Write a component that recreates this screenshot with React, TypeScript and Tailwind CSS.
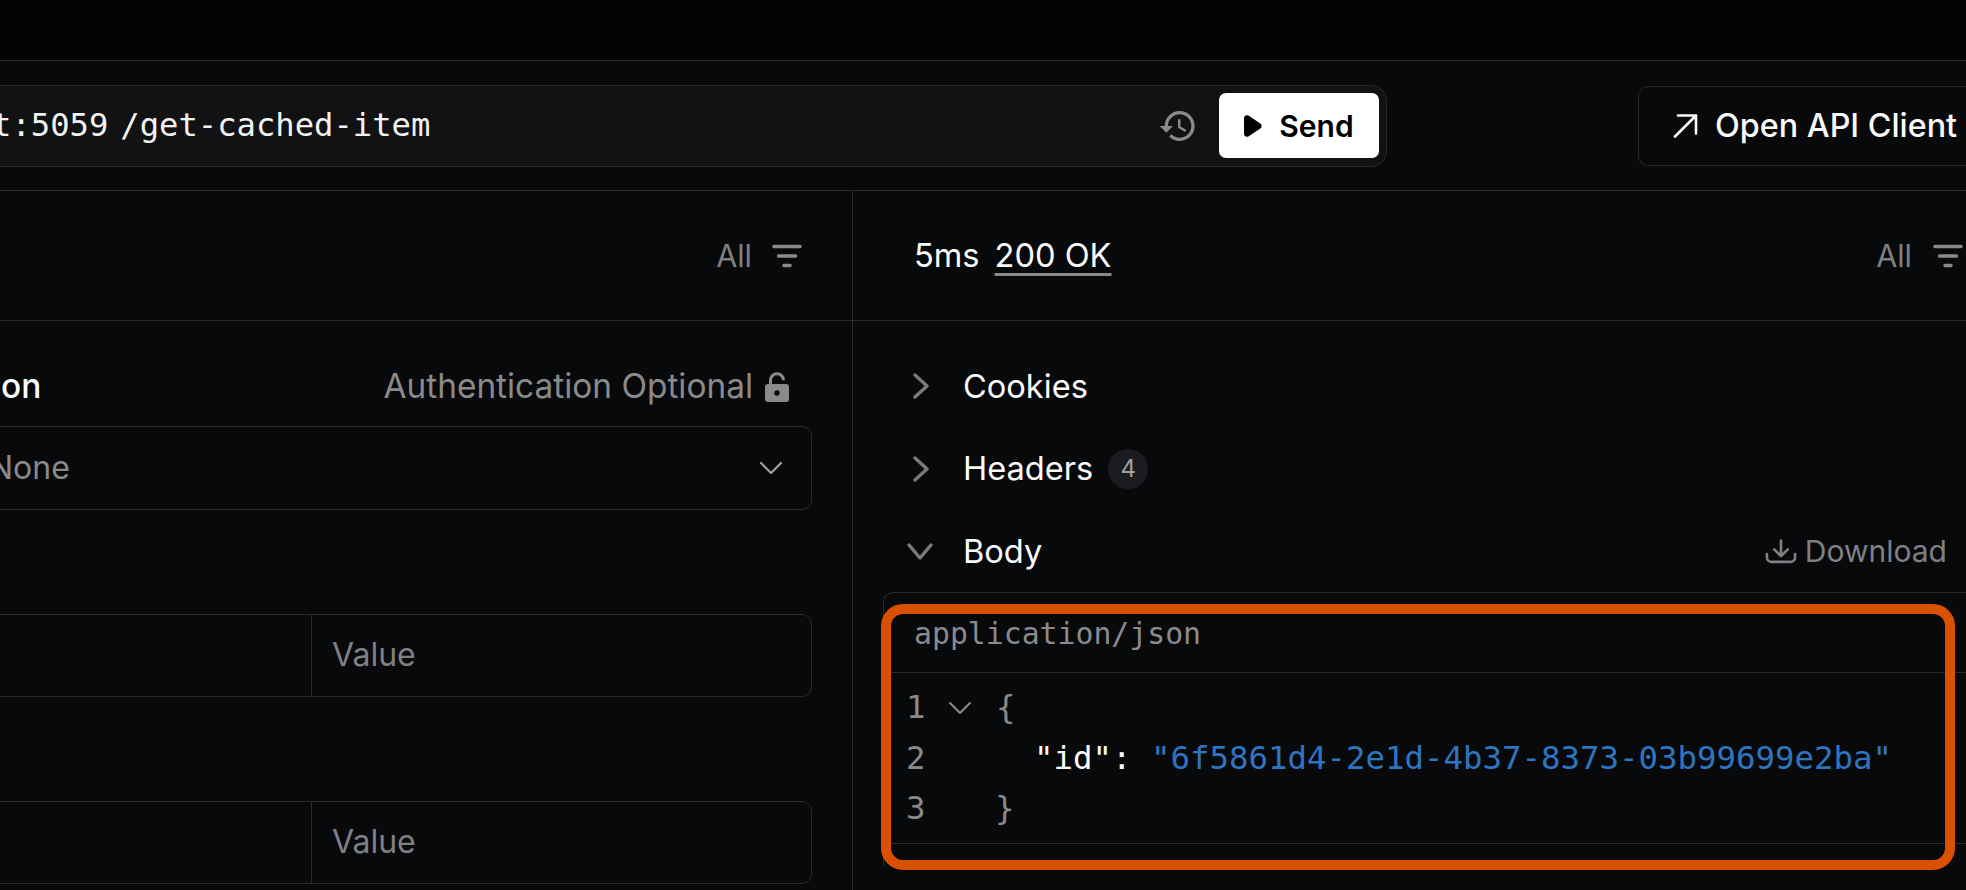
import React from 'react';
import { MdHistory } from 'react-icons/md';

function FilterIcon() {
  return (
    <svg width="30" height="24" viewBox="0 0 30 24" fill="none" stroke="#8a8a8a" strokeWidth="3.5" strokeLinecap="round">
      <path d="M2 2.5h26M6.5 12h17M12 21.5h6" />
    </svg>
  );
}

function OpenLock() {
  return (
    <svg width="24" height="30" viewBox="0 0 24 30">
      <path d="M5.5 13V8.2a6.5 6.5 0 0 1 13 0" fill="none" stroke="#8a8a8a" strokeWidth="3" />
      <rect x="0" y="12" width="24" height="18" rx="3" fill="#8a8a8a" />
      <circle cx="12" cy="21" r="2.7" fill="#08090b" />
    </svg>
  );
}

function PlayIcon() {
  return (
    <svg width="18" height="22" viewBox="0 0 18 22" fill="#000">
      <path d="M0 3.2C0 .9 2.4-.6 4.4.6l11.9 7.9c1.7 1.1 1.7 3.9 0 5L4.4 21.4C2.4 22.6 0 21.1 0 18.8z" />
    </svg>
  );
}

function ArrowIcon() {
  return (
    <svg width="25" height="25" viewBox="0 0 25 25" fill="none" stroke="#fafafa" strokeWidth="2.6" strokeLinecap="round" strokeLinejoin="round">
      <path d="M2 23.5 23 2.5M5 2.5h18v18" />
    </svg>
  );
}

function DownloadIcon() {
  return (
    <svg width="32" height="25" viewBox="0 0 30 24" fill="none" stroke="#7f8084" strokeWidth="2.5" strokeLinecap="round" strokeLinejoin="round">
      <path d="M15 1.5v14.500M8.500 10l6.500 6.500 6.500-6.500M1.500 14.500v3a4.500 4.500 0 0 0 4.500 4.500h18a4.500 4.500 0 0 0 4.500-4.500v-3" />
    </svg>
  );
}

function ChevronRightIcon() {
  return (
    <svg width="16" height="26" viewBox="0 0 16 26" fill="none" stroke="#7a7a7c" strokeWidth="3.4" strokeLinecap="round" strokeLinejoin="round">
      <path d="M2 2l12 11L2 24" />
    </svg>
  );
}

function ChevronDownIcon({ width, height, stroke, strokeWidth }: { width: number; height: number; stroke: string; strokeWidth: number }) {
  return (
    <svg width={width} height={height} viewBox={`0 0 ${width} ${height}`} fill="none" stroke={stroke} strokeWidth={strokeWidth} strokeLinecap="round" strokeLinejoin="round">
      <path d={`M2 2l${width / 2 - 2} ${height - 4} ${width / 2 - 2} ${-(height - 4)}`} />
    </svg>
  );
}

function KeyValueRow() {
  return (
    <div className="-ml-[20px] mt-[104px] flex h-[83px] rounded-r-[10px] border border-[#2a2b2e]">
      <div className="w-[331px] border-r border-[#2a2b2e]" />
      <div className="flex flex-1 items-center pb-[2px] pl-[20px] text-[32px] text-[#7f8084]">Value</div>
    </div>
  );
}

function SectionRow({ title, open, badge }: { title: string; open?: boolean; badge?: string }) {
  return (
    <div className="flex h-[82.5px] items-center pr-[19px]">
      <div className="flex w-[110px] pl-[54px]">
        {open ? <ChevronDownIcon width={26} height={17} stroke="#7a7a7c" strokeWidth={3.4} /> : <div className="pl-[6px]"><ChevronRightIcon /></div>}
      </div>
      <span className="text-[32.6px] text-[#fafafa]">{title}</span>
      {badge && (
        <span className="ml-[15px] flex h-[40px] w-[40px] items-center justify-center rounded-full bg-[#1b1c1f] text-[24px] text-[#a0a0a4]">
          {badge}
        </span>
      )}
      {open && (
        <div className="ml-auto flex items-center gap-[8px] text-[#7f8084]">
          <DownloadIcon />
          <span>Download</span>
        </div>
      )}
    </div>
  );
}

export default function App() {
  return (
    <div className="relative h-[890px] w-[1966px] overflow-hidden bg-[#08090b] font-[Inter,sans-serif] text-[30px] leading-none">
      <div className="h-[61px] border-b border-[#2a2b2e] bg-[#020203]" />

      {/* url bar + open client */}
      <div className="flex h-[130px] items-center justify-between border-b border-[#2a2b2e]">
        <div className="flex h-[82px] w-[1387px] items-center rounded-r-[16px] border border-l-0 border-[#26272a] bg-[#111214] pr-[7px]">
          <div className="-ml-[8px] flex flex-1 items-center font-['DejaVu_Sans_Mono',monospace] text-[32.2px] text-[#f2f2f2]">
            <span>t:5059</span>
            <span className="ml-[12px]">/get-cached-item</span>
          </div>
          <MdHistory size={40} className="mr-[21px] text-[#8a8a8a]" />
          <button className="flex h-[65px] w-[160px] items-center justify-center gap-[17px] rounded-[7px] bg-white font-semibold text-black">
            <PlayIcon />
            Send
          </button>
        </div>
        <div className="flex h-[80px] w-[328px] items-center gap-[17px] rounded-l-[10px] border border-r-0 border-[#26272a] pl-[34px] text-[32.3px] font-medium text-[#fafafa]">
          <ArrowIcon />
          <span className="whitespace-nowrap pt-[2px]">Open API Client</span>
        </div>
      </div>

      <div className="flex h-[699px]">
        {/* request */}
        <div className="w-[853px] shrink-0 overflow-hidden border-r border-[#2a2b2e]">
          <div className="flex h-[130px] items-center justify-end gap-[20px] border-b border-[#2a2b2e] pr-[50px] text-[30.5px] text-[#7f8084]">
            <span className="pt-[2px]">All</span>
            <FilterIcon />
          </div>
          <div className="pr-[40px]">
            <div className="flex h-[105px] items-center justify-between pt-[27px] text-[33.4px]">
              <span className="ml-[1px] font-medium text-[#fafafa]">on</span>
              <div className="flex items-center gap-[12px] pr-[23px] text-[#8a8a8a]">
                Authentication Optional
                <OpenLock />
              </div>
            </div>
            <div className="-ml-[20px] flex h-[84px] items-center justify-between rounded-r-[10px] border border-[#2a2b2e] pr-[28px] text-[#8a8a8a]">
              <span className="mb-[1px] ml-[8px] text-[32px]">None</span>
              <ChevronDownIcon width={24} height={14} stroke="#a0a0a4" strokeWidth={2.2} />
            </div>
            <KeyValueRow />
            <KeyValueRow />
          </div>
        </div>

        {/* response */}
        <div className="min-w-0 flex-1">
          <div className="flex h-[130px] items-center border-b border-[#2a2b2e] pl-[61px] pr-[3px] text-[32.6px]">
            <span className="text-[#fafafa]">5ms</span>
            <span className="ml-[15px] text-[#fafafa] underline decoration-[#8a8a8a] decoration-[3px] underline-offset-[6px]">200 OK</span>
            <span className="ml-auto pt-[2px] text-[30.5px] text-[#7f8084]">All</span>
            <span className="ml-[21px]">
              <FilterIcon />
            </span>
          </div>
          <div className="pt-[24px]">
            <SectionRow title="Cookies" />
            <SectionRow title="Headers" badge="4" />
            <SectionRow title="Body" open />
          </div>
          <div className="-mt-[1px] ml-[30px] h-[274px] rounded-tl-[10px] border-l border-t border-[#2a2b2e] font-['DejaVu_Sans_Mono',monospace]">
            <div className="flex h-[80px] items-center border-b border-[#2a2b2e] pl-[30px] pt-[4px] text-[29.8px] text-[#8a8a8f]">
              application/json
            </div>
            <div className="h-[171px] border-b border-[#2a2b2e] pt-[10px] text-[32.4px]">
              <div className="flex h-[50px] items-center pl-[22px]">
                <span className="w-[42px] text-[#8a8a8a]">1</span>
                <ChevronDownIcon width={24} height={14} stroke="#8a8a8a" strokeWidth={2} />
                <span className="ml-[24px] text-[#8a8a8a]">{'{'}</span>
              </div>
              <div className="flex h-[50px] items-center whitespace-pre pl-[22px] pt-[1px]">
                <span className="w-[128px] text-[#8a8a8a]">2</span>
                <span className="text-[#fafafa]">"id": </span>
                <span className="text-[#2e75c0]">"6f5861d4-2e1d-4b37-8373-03b99699e2ba"</span>
              </div>
              <div className="flex h-[50px] items-center pl-[22px] pt-[1px]">
                <span className="w-[89px] text-[#8a8a8a]">3</span>
                <span className="text-[#8a8a8a]">{'}'}</span>
              </div>
            </div>
          </div>
        </div>
      </div>

      {/* annotation drawn over the response body */}
      <div className="absolute left-[881px] top-[604px] h-[266px] w-[1074px] rounded-[22px] border-[10px] border-[#d95000]" />
    </div>
  );
}
